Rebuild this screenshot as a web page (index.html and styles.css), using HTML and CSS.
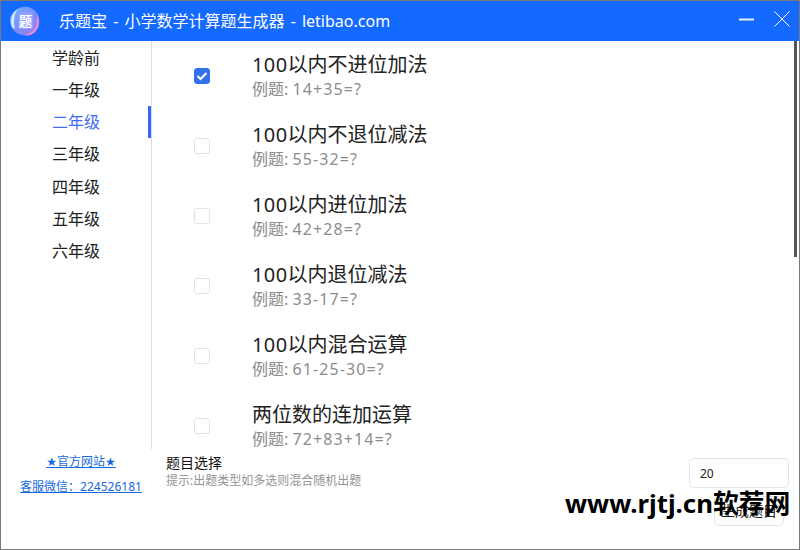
FILE: index.html
```html
<!DOCTYPE html>
<html lang="zh-CN">
<head>
<meta charset="utf-8">
<title>乐题宝</title>
<link rel="stylesheet" href="styles.css">
</head>
<body>
<div class="window">
  <header class="titlebar">
    <svg class="logo" width="32" height="32" viewBox="0 0 32 32">
      <defs>
        <linearGradient id="lg" x1="0" y1="0" x2="1" y2="1">
          <stop offset="0" stop-color="#6db4ff"/>
          <stop offset="0.55" stop-color="#7c8cf8"/>
          <stop offset="1" stop-color="#a47ce6"/>
        </linearGradient>
      </defs>
      <path d="M14 2C20 1 26 4 29 10C31 15 31 22 26 27C22 31 16 31 10 29C4 27 1 21 1 15C1 9 7 3 14 2Z" fill="url(#lg)"/>
      <path d="M28 9C31 15 31 22 26 27C23 30 19 31 15 30C20 29 25 26 27 21C28 17 28 13 28 9Z" fill="#e58ad8"/>
      <path d="M3 22C1 16 2 8 9 4C5 9 4 16 6 24Z" fill="#cdebff"/>
      <rect x="9" y="7" width="15" height="17" rx="2" fill="#929eff"/>
      <text x="16.5" y="20.5" class="logo-char">题</text>
    </svg>
    <div class="app-title">乐题宝 - 小学数学计算题生成器 - letibao.com</div>
    <div class="win-buttons">
      <svg width="16" height="16" viewBox="0 0 16 16"><path d="M0 8.5H15" stroke="#fff" stroke-width="2" fill="none" opacity=".9"/></svg>
      <svg width="16" height="16" viewBox="0 0 16 16"><path d="M.5 .5L15.5 15.5M15.5 .5L.5 15.5" stroke="#fff" stroke-width="1" fill="none"/></svg>
    </div>
  </header>

  <div class="main">
    <nav class="sidebar">
      <div class="grade">学龄前</div>
      <div class="grade">一年级</div>
      <div class="grade active">二年级</div>
      <div class="grade">三年级</div>
      <div class="grade">四年级</div>
      <div class="grade">五年级</div>
      <div class="grade">六年级</div>
    </nav>
    <section class="list">
      <div class="row">
        <span class="check checked"><svg width="12" height="10" viewBox="0 0 12 10"><path d="M1.5 5L4.5 8L10.5 2" stroke="#fff" stroke-width="2" fill="none"/></svg></span>
        <div class="row-text"><div class="row-title"><span class="num">100</span>以内不进位加法</div><div class="row-sub">例题: <span class="expr">14+35=?</span></div></div>
      </div>
      <div class="row">
        <span class="check"></span>
        <div class="row-text"><div class="row-title"><span class="num">100</span>以内不退位减法</div><div class="row-sub">例题: <span class="expr">55-32=?</span></div></div>
      </div>
      <div class="row">
        <span class="check"></span>
        <div class="row-text"><div class="row-title"><span class="num">100</span>以内进位加法</div><div class="row-sub">例题: <span class="expr">42+28=?</span></div></div>
      </div>
      <div class="row">
        <span class="check"></span>
        <div class="row-text"><div class="row-title"><span class="num">100</span>以内退位减法</div><div class="row-sub">例题: <span class="expr">33-17=?</span></div></div>
      </div>
      <div class="row">
        <span class="check"></span>
        <div class="row-text"><div class="row-title"><span class="num">100</span>以内混合运算</div><div class="row-sub">例题: <span class="expr">61-25-30=?</span></div></div>
      </div>
      <div class="row">
        <span class="check"></span>
        <div class="row-text"><div class="row-title">两位数的连加运算</div><div class="row-sub">例题: <span class="expr">72+83+14=?</span></div></div>
      </div>
    </section>
    <div class="scrollbar"></div>
  </div>

  <footer class="footer">
    <div class="links">
      <a class="link" href="#"><span class="star">★</span>官方网站<span class="star">★</span></a>
      <a class="link" href="#">客服微信：224526181</a>
    </div>
    <div class="hint">
      <div class="hint-title">题目选择</div>
      <div class="hint-text">提示:出题类型如多选则混合随机出题</div>
    </div>
    <div class="actions">
      <div class="count">20</div>
      <div class="generate">生成题目</div>
    </div>
  </footer>
  <div class="watermark">www.rjtj.cn软荐网</div>
</div>
</body>
</html>
```

FILE: styles.css
```css
* { box-sizing: border-box; }
html, body { margin: 0; padding: 0; }
body {
  width: 800px;
  height: 550px;
  overflow: hidden;
  font-family: "Noto Sans", "Noto Sans CJK SC", sans-serif;
  background: #fff;
}
.window {
  position: relative;
  width: 800px;
  height: 550px;
  border: 1px solid #777;
  display: flex;
  flex-direction: column;
  overflow: hidden;
}
.titlebar {
  height: 40px;
  flex: none;
  background: #1469ff;
  color: #fff;
  display: flex;
  align-items: center;
  padding-left: 8px;
}
.logo { flex: none; }
.logo-char {
  font-family: "Noto Sans CJK SC", sans-serif;
  font-size: 13px;
  font-weight: 700;
  fill: #fff;
  text-anchor: middle;
}
.app-title {
  margin-left: 18px;
  font-size: 16px;
  line-height: 40px;
  word-spacing: 2px;
  white-space: nowrap;
  flex: 1;
}
.win-buttons {
  display: flex;
  align-items: center;
  gap: 19px;
  padding-right: 9px;
  height: 36px;
  margin-bottom: 4px;
}
.main {
  height: 408px;
  flex: none;
  display: flex;
  position: relative;
  overflow: hidden;
}
.sidebar {
  width: 151px;
  flex: none;
  border-right: 1px solid #dcdcdc;
  padding-top: 0.5px;
}
.grade {
  height: 32.25px;
  line-height: 32px;
  padding-left: 51px;
  font-size: 16px;
  color: #222;
  position: relative;
}
.grade.active { color: #3f6ef0; }
.grade.active::after {
  content: "";
  position: absolute;
  right: 0;
  top: 0;
  width: 3px;
  height: 32px;
  background: #2e6bf2;
}
.list { flex: 1; min-width: 0; overflow: hidden; }
.row {
  height: 70px;
  display: flex;
  align-items: center;
  padding-left: 42px;
}
.check {
  width: 16px;
  height: 16px;
  flex: none;
  border: 1px solid #e3e3e3;
  border-radius: 3px;
  background: #fff;
  display: flex;
  align-items: center;
  justify-content: center;
}
.check.checked { background: #3370ee; border-color: #3370ee; }
.row-text { margin-left: 42px; margin-bottom: 2px; }
.row-title {
  font-size: 20px;
  line-height: 27px;
  color: #222;
  white-space: nowrap;
}
.num { letter-spacing: .4px; }
.row-sub {
  font-size: 16px;
  line-height: 22px;
  color: #8c8c8c;
  white-space: nowrap;
}
.expr { letter-spacing: 1.1px; }
.scrollbar {
  position: absolute;
  right: 2px;
  top: 0;
  width: 3px;
  height: 216px;
  background: #555;
}
.footer {
  flex: 1;
  display: flex;
  position: relative;
}
.links {
  width: 160px;
  flex: none;
  display: flex;
  flex-direction: column;
  align-items: center;
  padding-top: 4px;
  gap: 7px;
}
.link {
  font-size: 12px;
  line-height: 18px;
  color: #1769e0;
  text-decoration: underline;
  white-space: nowrap;
}
.star { font-family: "DejaVu Sans", sans-serif; }
.hint { margin-left: 5px; padding-top: 4px; flex: 1; }
.hint-title { font-size: 14px; line-height: 20px; color: #111; }
.hint-text { font-size: 12px; line-height: 15px; color: #949494; }
.actions {
  width: 110px;
  flex: none;
  padding-top: 9px;
  display: flex;
  flex-direction: column;
  align-items: flex-end;
  gap: 8px;
  padding-right: 10px;
}
.count {
  width: 100px;
  height: 30px;
  border: 1px solid #e4e4e4;
  border-radius: 5px;
  font-size: 12px;
  line-height: 30px;
  padding-left: 10px;
  color: #222;
}
.generate {
  width: 70px;
  height: 30px;
  margin-right: 5px;
  border: 1px solid #e4e4e4;
  border-radius: 5px;
  font-size: 14px;
  line-height: 28px;
  text-align: center;
  color: #222;
}
.watermark {
  position: absolute;
  left: 564px;
  top: 485px;
  font-family: "Noto Sans", "Noto Sans CJK SC", sans-serif;
  font-size: 25.8px;
  font-weight: 700;
  line-height: 34px;
  color: #000;
  white-space: nowrap;
}
```
